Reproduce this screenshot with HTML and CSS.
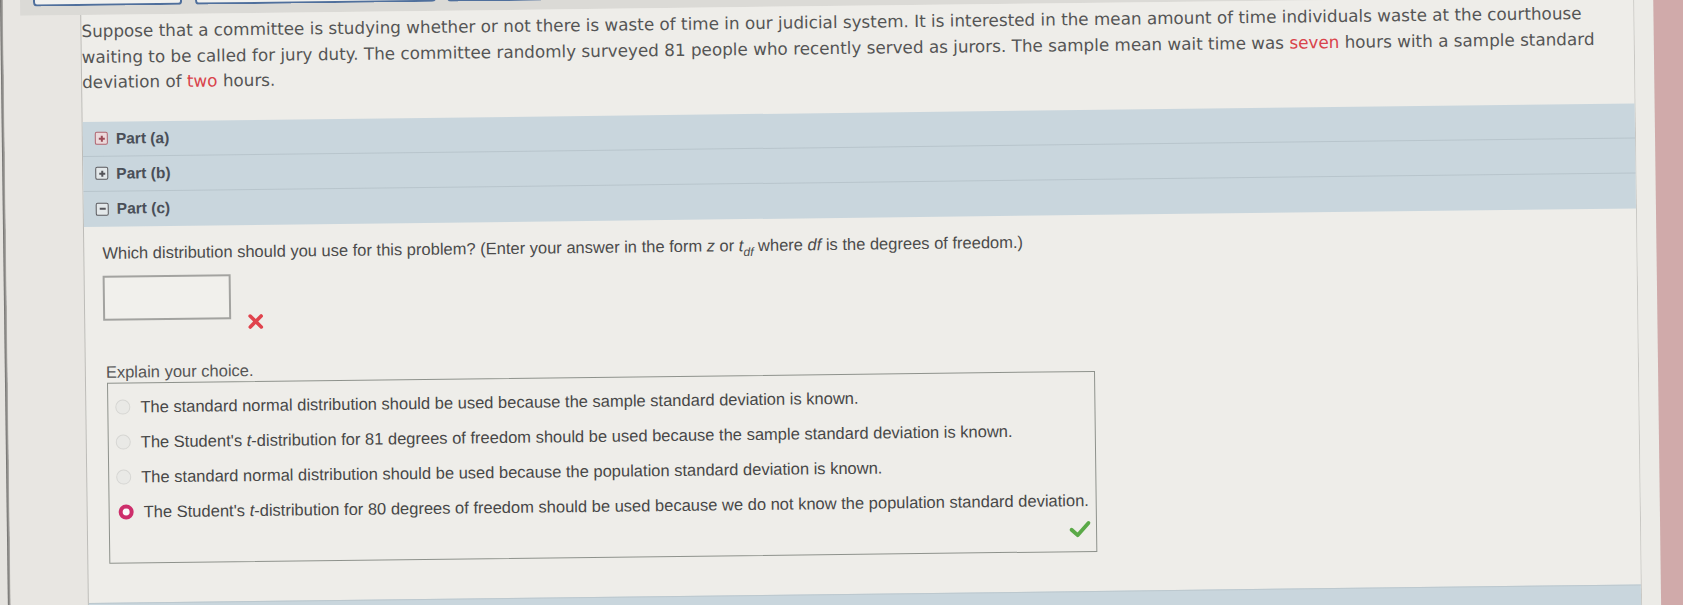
FILE: index.html
```html
<!DOCTYPE html>
<html lang="en">
<head>
<meta charset="utf-8">
<title>Question</title>
<link rel="stylesheet" href="styles.css">
</head>
<body>
<div class="screen">
  <div class="edge"></div>
  <div class="main">
    <div class="topbar">
      <div class="tab tab-1"></div>
      <div class="tab tab-2"></div>
      <div class="tab tab-3"></div>
    </div>
    <div class="row">
      <div class="gutter"></div>
      <div class="panel">
        <p class="question">Suppose that a committee is studying whether or not there is waste of time in our judicial system. It is interested in the mean amount of time individuals waste at the courthouse waiting to be called for jury duty. The committee randomly surveyed 81 people who recently served as jurors. The sample mean wait time was <span class="hl">seven</span> hours with a sample standard deviation of <span class="hl">two</span> hours.</p>

        <div class="parts">
          <div class="part">
            <span class="toggle toggle-open-red"><span class="plus"></span></span>
            <span class="part-label">Part (a)</span>
          </div>
          <div class="part">
            <span class="toggle"><span class="plus"></span></span>
            <span class="part-label">Part (b)</span>
          </div>
          <div class="part">
            <span class="toggle"><span class="minus"></span></span>
            <span class="part-label">Part (c)</span>
          </div>
        </div>

        <div class="part-body">
          <p class="prompt">Which distribution should you use for this problem? (Enter your answer in the form <i>z</i> or <i>t</i><sub><i>df</i></sub> where <i>df</i> is the degrees of freedom.)</p>
          <div class="answer-row">
            <div class="answer-box"></div>
            <svg class="cross" width="17" height="17" viewBox="0 0 17 17"><path d="M3 3 L14 14 M14 3 L3 14" stroke="#e0434d" stroke-width="3.6" stroke-linecap="round" fill="none"/></svg>
          </div>
          <p class="explain">Explain your choice.</p>
          <div class="choices">
            <div class="choice"><span class="radio"></span><span>The standard normal distribution should be used because the sample standard deviation is known.</span></div>
            <div class="choice"><span class="radio"></span><span>The Student's <i>t</i>-distribution for 81 degrees of freedom should be used because the sample standard deviation is known.</span></div>
            <div class="choice"><span class="radio"></span><span>The standard normal distribution should be used because the population standard deviation is known.</span></div>
            <div class="choice"><span class="radio radio-on"></span><span>The Student's <i>t</i>-distribution for 80 degrees of freedom should be used because we do not know the population standard deviation.</span></div>
            <div class="check-row">
              <svg width="22" height="18" viewBox="0 0 22 18"><path d="M2.5 9.5 L8.5 15 L19.5 3" stroke="#5aa947" stroke-width="3.8" stroke-linecap="round" stroke-linejoin="round" fill="none"/></svg>
            </div>
          </div>
        </div>
        <div class="next-band"></div>
      </div>
      <div class="rstrip"></div>
      <div class="pink"></div>
    </div>
  </div>
</div>
</body>
</html>
```

FILE: styles.css
```css
html, body {
  margin: 0;
  padding: 0;
  background: #e5e3df;
  overflow: hidden;
}

.screen {
  display: flex;
  width: 1720px;
  height: 650px;
  transform-origin: 0 0;
  transform: matrix(1, -0.012, 0.013, 1, 0, 0);
}

.edge {
  width: 3px;
  background: linear-gradient(to right, #6d6c6a, #b8b6b2);
}

.main {
  flex: 1;
  display: flex;
  flex-direction: column;
  background: #e8e6e2;
}

.topbar {
  height: 16px;
  margin-left: 17px;
  padding-left: 13px;
  display: flex;
  gap: 11px;
  background: #dbdad6;
}

.tab {
  height: 5px;
  border: 2px solid #4f6f9c;
  border-top: none;
  border-radius: 0 0 4px 4px;
  background: #f1f1ef;
}
.tab-1 { width: 145px; }
.tab-2 { width: 237px; margin-left: 2px; }
.tab-3 { width: 235px; }

.row {
  flex: 1;
  display: flex;
}

.gutter {
  width: 77px;
  background: #e8e6e2;
}

.panel {
  width: 1552px;
  background: #eeede9;
  border-left: 1px solid #bdbcb8;
  border-right: 1px solid #c9c8c4;
  display: flex;
  flex-direction: column;
}

.question {
  margin: 4px 14px 0 0;
  font-family: "DejaVu Sans", Verdana, sans-serif;
  font-size: 16.8px;
  line-height: 25.5px;
  color: #555555;
}

.hl { color: #d9434b; }

.parts {
  margin-top: 26px;
  background: #c9d6dd;
}

.part {
  height: 34px;
  border-bottom: 1px solid #b8c5cc;
  display: flex;
  align-items: center;
  padding-left: 12px;
  gap: 8px;
  font-family: "Liberation Sans", Arial, sans-serif;
  font-weight: bold;
  font-size: 15.5px;
  color: #4a4f58;
}
.part:last-child { border-bottom: none; height: 35px; }

.toggle {
  width: 11px;
  height: 11px;
  border: 1.5px solid #5a5a5e;
  border-radius: 2px;
  background: #e3e8ea;
  display: flex;
  align-items: center;
  justify-content: center;
}
.toggle-open-red {
  border-color: #b0646f;
  background: #ecd9db;
}
.plus, .minus {
  width: 6px;
  height: 2px;
  background: #55555a;
  position: relative;
}
.plus::after {
  content: "";
  position: absolute;
  left: 2px;
  top: -2px;
  width: 2px;
  height: 6px;
  background: inherit;
}
.toggle-open-red .plus { background: #9c4a56; }

.part-body {
  padding: 16px 0 0 18px;
  font-family: "Liberation Sans", Arial, sans-serif;
  font-size: 16.5px;
  color: #4b4b4b;
}

.prompt {
  margin: 0;
  line-height: 20px;
}
.prompt sub {
  font-size: 12px;
  vertical-align: -5px;
  line-height: 0;
}

.answer-row {
  margin-top: 13px;
  display: flex;
  align-items: flex-end;
  gap: 16px;
}

.answer-box {
  width: 124px;
  height: 41px;
  border: 2px solid #a3a3a0;
  background: #f1f0ec;
}

.cross { margin-bottom: -11px; }

.explain {
  margin: 41px 0 0 2px;
  line-height: 20px;
  color: #555;
}

.choices {
  margin: 1px 0 0 3px;
  width: 988px;
  height: 181px;
  border: 1.5px solid #8e928c;
  padding-top: 6px;
  box-sizing: border-box;
}

.choice {
  height: 35px;
  display: flex;
  align-items: center;
  padding-left: 7px;
  gap: 10px;
  color: #474747;
  white-space: nowrap;
}

.radio {
  width: 13px;
  height: 13px;
  border-radius: 50%;
  border: 1px solid #d6d6d3;
  background: #e9e9e6;
  flex: none;
}
.radio-on {
  width: 7px;
  height: 7px;
  border: 4px solid #cd2e6b;
  background: #fbfbfb;
  margin-left: 2px;
}

.check-row {
  display: flex;
  justify-content: flex-end;
  padding: 2px 5px 0 0;
}

.next-band {
  margin-top: 39px;
  flex: 1;
  background: #c9d6dd;
  border-top: 1px solid #bcc8ce;
}

.rstrip {
  width: 19px;
  background: #ecebe7;
}

.pink {
  flex: 1;
  background: #d0aaaa;
}
```
